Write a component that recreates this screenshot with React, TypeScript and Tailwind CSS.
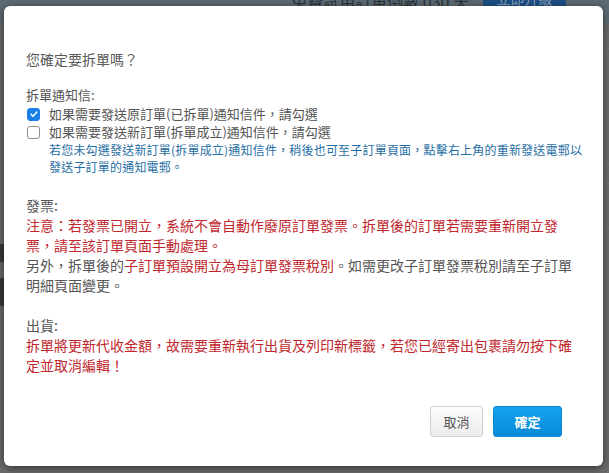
import { useState } from "react";

const FONT = {
  fontFamily: '"Noto Sans CJK TC", "Noto Sans", "Liberation Sans", sans-serif',
};

function Checkbox({ checked, onChange }: { checked: boolean; onChange: () => void }) {
  return (
    <button
      type="button"
      onClick={onChange}
      className={`flex h-[13px] w-[13px] shrink-0 items-center justify-center rounded-[3px] border ${
        checked ? "border-[#1a7fe8] bg-[#1a7fe8]" : "border-[#8f8f8f] bg-white"
      }`}
    >
      {checked && (
        <svg viewBox="0 0 12 12" className="h-[10px] w-[10px]">
          <path d="M2.5 6.3l2.3 2.3 4.7-5" fill="none" stroke="white" strokeWidth="1.8" strokeLinecap="round" strokeLinejoin="round" />
        </svg>
      )}
    </button>
  );
}

export default function App() {
  const [sendOld, setSendOld] = useState(true);
  const [sendNew, setSendNew] = useState(false);

  return (
    <div className="relative h-[473px] w-[609px] overflow-hidden bg-[#6c6c6c]" style={FONT}>
      {/* page behind the overlay */}
      <div className="flex h-[25px] items-start justify-end gap-[14px] overflow-hidden bg-[#5e6b74] pr-[43px]">
        <span className="-mt-[9px] whitespace-nowrap text-[16px] leading-[20px] text-[#2c353c]">免費試用訂單倒數 030 天</span>
        <span className="-mt-[4px] flex h-[11px] w-[83px] items-end justify-center overflow-hidden bg-[#1d4f86] text-[14px] leading-[18px] text-[#8aa3bf]">
          立即升級
        </span>
      </div>
      <div className="flex flex-col">
        <div className="h-[24px] border-b border-[#747474]" />
        <div className="h-[115px] border-b border-[#747474]" />
        <div className="h-[20px] border-b border-[#747474]" />
        <div className="h-[44px] border-b border-[#747474]" />
        <div className="flex h-[50px] items-center">
          <div className="h-[18px] w-[4px] bg-[#3a3a3a]" />
        </div>
        <div className="flex h-[40px] items-start">
          <div className="h-[28px] w-[4px] bg-[#3a3a3a]" />
        </div>
      </div>

      {/* modal */}
      <div className="absolute left-[4px] top-[6px] flex h-[460px] w-[599px] flex-col whitespace-nowrap rounded-[6px] bg-white px-[22px] pt-[43px] shadow-[0_2px_10px_rgba(0,0,0,0.55)]">
        <h2 className="text-[14px] leading-[20px] text-[#5a5a5a]">您確定要拆單嗎？</h2>

        <div className="mt-[16px] text-[13px] leading-[20px] text-[#555]">拆單通知信:</div>
        <label className="flex h-[18px] items-center gap-[9px] pl-[1px] text-[13px] text-[#555]">
          <Checkbox checked={sendOld} onChange={() => setSendOld(!sendOld)} />
          <span>如果需要發送原訂單(已拆單)通知信件，請勾選</span>
        </label>
        <label className="flex h-[18px] items-center gap-[9px] pl-[1px] text-[13px] text-[#555]">
          <Checkbox checked={sendNew} onChange={() => setSendNew(!sendNew)} />
          <span>如果需要發送新訂單(拆單成立)通知信件，請勾選</span>
        </label>
        <p className="pl-[23px] text-[12px] leading-[17px] tracking-[0.2px] text-[#1f6ea4]">
          若您未勾選發送新訂單(拆單成立)通知信件，稍後也可至子訂單頁面，點擊右上角的重新發送電郵以
          <br />
          發送子訂單的通知電郵。
        </p>

        <div className="mt-[20px] text-[14px] leading-[20px] text-[#555]">
          <div>發票:</div>
          <p className="text-[#c0282e]">
            注意：若發票已開立，系統不會自動作廢原訂單發票。拆單後的訂單若需要重新開立發
            <br />
            票，請至該訂單頁面手動處理。
          </p>
          <p>
            另外，拆單後的<span className="text-[#c0282e]">子訂單預設開立為母訂單發票稅別</span>。如需更改子訂單發票稅別請至子訂單
            <br />
            明細頁面變更。
          </p>
        </div>

        <div className="mt-[20px] text-[14px] leading-[20px] text-[#555]">
          <div>出貨:</div>
          <p className="text-[#c0282e]">
            拆單將更新代收金額，故需要重新執行出貨及列印新標籤，若您已經寄出包裹請勿按下確
            <br />
            定並取消編輯！
          </p>
        </div>

        <div className="mt-[31px] flex justify-end gap-[10px] pr-[19px]">
          <button className="h-[31px] w-[53px] rounded-[3px] border border-[#cfcfcf] bg-gradient-to-b from-[#fdfdfd] to-[#ececec] text-[13px] text-[#555]">
            取消
          </button>
          <button className="h-[31px] w-[69px] rounded-[3px] border border-[#0a88d2] bg-gradient-to-b from-[#16a3ee] to-[#078ad8] text-[13px] font-bold text-white">
            確定
          </button>
        </div>
      </div>
    </div>
  );
}
